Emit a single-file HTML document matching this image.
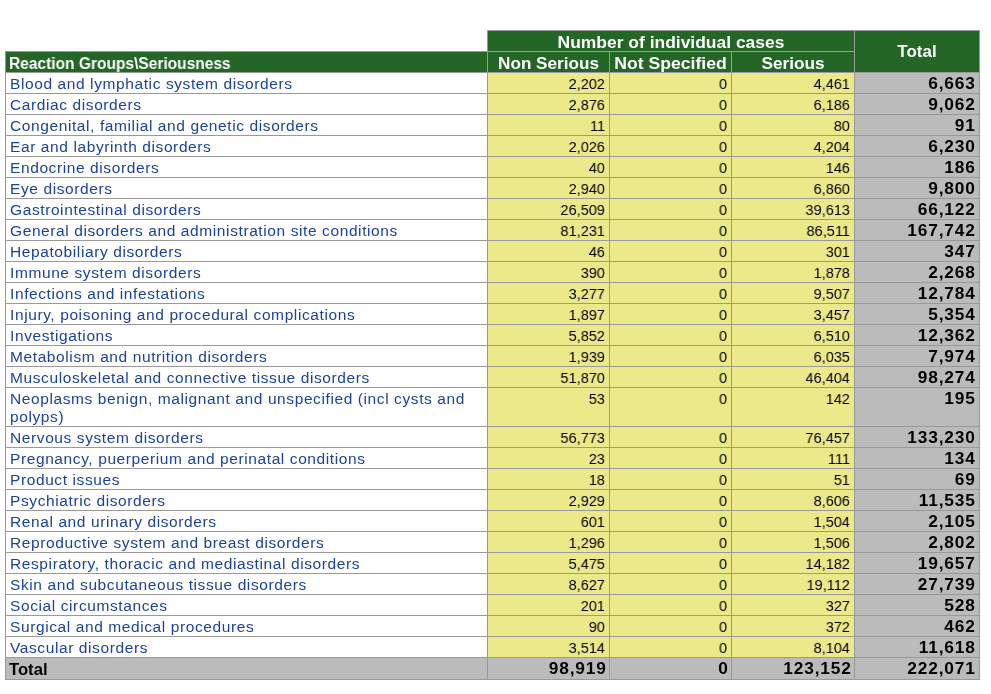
<!DOCTYPE html>
<html><head><meta charset="utf-8"><style>
html,body{margin:0;padding:0;background:#fff;width:991px;height:694px;overflow:hidden;position:relative}
i{position:absolute;display:block}
b{position:absolute;display:block;white-space:nowrap;will-change:transform;line-height:20px;height:20px;font-family:"Liberation Sans",sans-serif;font-weight:normal}
</style></head><body>
<i style="left:487px;top:30px;width:493px;height:43px;background:#999999"></i>
<i style="left:5px;top:51px;width:483px;height:22px;background:#999999"></i>
<i style="left:488px;top:31px;width:366px;height:20px;background:#246626"></i>
<i style="left:855px;top:31px;width:124px;height:41px;background:#246626"></i>
<i style="left:6px;top:52px;width:481px;height:20px;background:#246626"></i>
<i style="left:488px;top:52px;width:121px;height:20px;background:#246626"></i>
<i style="left:610px;top:52px;width:121px;height:20px;background:#246626"></i>
<i style="left:732px;top:52px;width:122px;height:20px;background:#246626"></i>
<i style="left:5px;top:72px;width:975px;height:608px;background:#999999"></i>
<i style="left:6px;top:73px;width:481px;height:20px;background:#ffffff"></i>
<i style="left:488px;top:73px;width:121px;height:20px;background:#ece98b"></i>
<i style="left:610px;top:73px;width:121px;height:20px;background:#ece98b"></i>
<i style="left:732px;top:73px;width:122px;height:20px;background:#ece98b"></i>
<i style="left:855px;top:73px;width:124px;height:20px;background:#bbbbbb"></i>
<i style="left:6px;top:94px;width:481px;height:20px;background:#ffffff"></i>
<i style="left:488px;top:94px;width:121px;height:20px;background:#ece98b"></i>
<i style="left:610px;top:94px;width:121px;height:20px;background:#ece98b"></i>
<i style="left:732px;top:94px;width:122px;height:20px;background:#ece98b"></i>
<i style="left:855px;top:94px;width:124px;height:20px;background:#bbbbbb"></i>
<i style="left:6px;top:115px;width:481px;height:20px;background:#ffffff"></i>
<i style="left:488px;top:115px;width:121px;height:20px;background:#ece98b"></i>
<i style="left:610px;top:115px;width:121px;height:20px;background:#ece98b"></i>
<i style="left:732px;top:115px;width:122px;height:20px;background:#ece98b"></i>
<i style="left:855px;top:115px;width:124px;height:20px;background:#bbbbbb"></i>
<i style="left:6px;top:136px;width:481px;height:20px;background:#ffffff"></i>
<i style="left:488px;top:136px;width:121px;height:20px;background:#ece98b"></i>
<i style="left:610px;top:136px;width:121px;height:20px;background:#ece98b"></i>
<i style="left:732px;top:136px;width:122px;height:20px;background:#ece98b"></i>
<i style="left:855px;top:136px;width:124px;height:20px;background:#bbbbbb"></i>
<i style="left:6px;top:157px;width:481px;height:20px;background:#ffffff"></i>
<i style="left:488px;top:157px;width:121px;height:20px;background:#ece98b"></i>
<i style="left:610px;top:157px;width:121px;height:20px;background:#ece98b"></i>
<i style="left:732px;top:157px;width:122px;height:20px;background:#ece98b"></i>
<i style="left:855px;top:157px;width:124px;height:20px;background:#bbbbbb"></i>
<i style="left:6px;top:178px;width:481px;height:20px;background:#ffffff"></i>
<i style="left:488px;top:178px;width:121px;height:20px;background:#ece98b"></i>
<i style="left:610px;top:178px;width:121px;height:20px;background:#ece98b"></i>
<i style="left:732px;top:178px;width:122px;height:20px;background:#ece98b"></i>
<i style="left:855px;top:178px;width:124px;height:20px;background:#bbbbbb"></i>
<i style="left:6px;top:199px;width:481px;height:20px;background:#ffffff"></i>
<i style="left:488px;top:199px;width:121px;height:20px;background:#ece98b"></i>
<i style="left:610px;top:199px;width:121px;height:20px;background:#ece98b"></i>
<i style="left:732px;top:199px;width:122px;height:20px;background:#ece98b"></i>
<i style="left:855px;top:199px;width:124px;height:20px;background:#bbbbbb"></i>
<i style="left:6px;top:220px;width:481px;height:20px;background:#ffffff"></i>
<i style="left:488px;top:220px;width:121px;height:20px;background:#ece98b"></i>
<i style="left:610px;top:220px;width:121px;height:20px;background:#ece98b"></i>
<i style="left:732px;top:220px;width:122px;height:20px;background:#ece98b"></i>
<i style="left:855px;top:220px;width:124px;height:20px;background:#bbbbbb"></i>
<i style="left:6px;top:241px;width:481px;height:20px;background:#ffffff"></i>
<i style="left:488px;top:241px;width:121px;height:20px;background:#ece98b"></i>
<i style="left:610px;top:241px;width:121px;height:20px;background:#ece98b"></i>
<i style="left:732px;top:241px;width:122px;height:20px;background:#ece98b"></i>
<i style="left:855px;top:241px;width:124px;height:20px;background:#bbbbbb"></i>
<i style="left:6px;top:262px;width:481px;height:20px;background:#ffffff"></i>
<i style="left:488px;top:262px;width:121px;height:20px;background:#ece98b"></i>
<i style="left:610px;top:262px;width:121px;height:20px;background:#ece98b"></i>
<i style="left:732px;top:262px;width:122px;height:20px;background:#ece98b"></i>
<i style="left:855px;top:262px;width:124px;height:20px;background:#bbbbbb"></i>
<i style="left:6px;top:283px;width:481px;height:20px;background:#ffffff"></i>
<i style="left:488px;top:283px;width:121px;height:20px;background:#ece98b"></i>
<i style="left:610px;top:283px;width:121px;height:20px;background:#ece98b"></i>
<i style="left:732px;top:283px;width:122px;height:20px;background:#ece98b"></i>
<i style="left:855px;top:283px;width:124px;height:20px;background:#bbbbbb"></i>
<i style="left:6px;top:304px;width:481px;height:20px;background:#ffffff"></i>
<i style="left:488px;top:304px;width:121px;height:20px;background:#ece98b"></i>
<i style="left:610px;top:304px;width:121px;height:20px;background:#ece98b"></i>
<i style="left:732px;top:304px;width:122px;height:20px;background:#ece98b"></i>
<i style="left:855px;top:304px;width:124px;height:20px;background:#bbbbbb"></i>
<i style="left:6px;top:325px;width:481px;height:20px;background:#ffffff"></i>
<i style="left:488px;top:325px;width:121px;height:20px;background:#ece98b"></i>
<i style="left:610px;top:325px;width:121px;height:20px;background:#ece98b"></i>
<i style="left:732px;top:325px;width:122px;height:20px;background:#ece98b"></i>
<i style="left:855px;top:325px;width:124px;height:20px;background:#bbbbbb"></i>
<i style="left:6px;top:346px;width:481px;height:20px;background:#ffffff"></i>
<i style="left:488px;top:346px;width:121px;height:20px;background:#ece98b"></i>
<i style="left:610px;top:346px;width:121px;height:20px;background:#ece98b"></i>
<i style="left:732px;top:346px;width:122px;height:20px;background:#ece98b"></i>
<i style="left:855px;top:346px;width:124px;height:20px;background:#bbbbbb"></i>
<i style="left:6px;top:367px;width:481px;height:20px;background:#ffffff"></i>
<i style="left:488px;top:367px;width:121px;height:20px;background:#ece98b"></i>
<i style="left:610px;top:367px;width:121px;height:20px;background:#ece98b"></i>
<i style="left:732px;top:367px;width:122px;height:20px;background:#ece98b"></i>
<i style="left:855px;top:367px;width:124px;height:20px;background:#bbbbbb"></i>
<i style="left:6px;top:388px;width:481px;height:38px;background:#ffffff"></i>
<i style="left:488px;top:388px;width:121px;height:38px;background:#ece98b"></i>
<i style="left:610px;top:388px;width:121px;height:38px;background:#ece98b"></i>
<i style="left:732px;top:388px;width:122px;height:38px;background:#ece98b"></i>
<i style="left:855px;top:388px;width:124px;height:38px;background:#bbbbbb"></i>
<i style="left:6px;top:427px;width:481px;height:20px;background:#ffffff"></i>
<i style="left:488px;top:427px;width:121px;height:20px;background:#ece98b"></i>
<i style="left:610px;top:427px;width:121px;height:20px;background:#ece98b"></i>
<i style="left:732px;top:427px;width:122px;height:20px;background:#ece98b"></i>
<i style="left:855px;top:427px;width:124px;height:20px;background:#bbbbbb"></i>
<i style="left:6px;top:448px;width:481px;height:20px;background:#ffffff"></i>
<i style="left:488px;top:448px;width:121px;height:20px;background:#ece98b"></i>
<i style="left:610px;top:448px;width:121px;height:20px;background:#ece98b"></i>
<i style="left:732px;top:448px;width:122px;height:20px;background:#ece98b"></i>
<i style="left:855px;top:448px;width:124px;height:20px;background:#bbbbbb"></i>
<i style="left:6px;top:469px;width:481px;height:20px;background:#ffffff"></i>
<i style="left:488px;top:469px;width:121px;height:20px;background:#ece98b"></i>
<i style="left:610px;top:469px;width:121px;height:20px;background:#ece98b"></i>
<i style="left:732px;top:469px;width:122px;height:20px;background:#ece98b"></i>
<i style="left:855px;top:469px;width:124px;height:20px;background:#bbbbbb"></i>
<i style="left:6px;top:490px;width:481px;height:20px;background:#ffffff"></i>
<i style="left:488px;top:490px;width:121px;height:20px;background:#ece98b"></i>
<i style="left:610px;top:490px;width:121px;height:20px;background:#ece98b"></i>
<i style="left:732px;top:490px;width:122px;height:20px;background:#ece98b"></i>
<i style="left:855px;top:490px;width:124px;height:20px;background:#bbbbbb"></i>
<i style="left:6px;top:511px;width:481px;height:20px;background:#ffffff"></i>
<i style="left:488px;top:511px;width:121px;height:20px;background:#ece98b"></i>
<i style="left:610px;top:511px;width:121px;height:20px;background:#ece98b"></i>
<i style="left:732px;top:511px;width:122px;height:20px;background:#ece98b"></i>
<i style="left:855px;top:511px;width:124px;height:20px;background:#bbbbbb"></i>
<i style="left:6px;top:532px;width:481px;height:20px;background:#ffffff"></i>
<i style="left:488px;top:532px;width:121px;height:20px;background:#ece98b"></i>
<i style="left:610px;top:532px;width:121px;height:20px;background:#ece98b"></i>
<i style="left:732px;top:532px;width:122px;height:20px;background:#ece98b"></i>
<i style="left:855px;top:532px;width:124px;height:20px;background:#bbbbbb"></i>
<i style="left:6px;top:553px;width:481px;height:20px;background:#ffffff"></i>
<i style="left:488px;top:553px;width:121px;height:20px;background:#ece98b"></i>
<i style="left:610px;top:553px;width:121px;height:20px;background:#ece98b"></i>
<i style="left:732px;top:553px;width:122px;height:20px;background:#ece98b"></i>
<i style="left:855px;top:553px;width:124px;height:20px;background:#bbbbbb"></i>
<i style="left:6px;top:574px;width:481px;height:20px;background:#ffffff"></i>
<i style="left:488px;top:574px;width:121px;height:20px;background:#ece98b"></i>
<i style="left:610px;top:574px;width:121px;height:20px;background:#ece98b"></i>
<i style="left:732px;top:574px;width:122px;height:20px;background:#ece98b"></i>
<i style="left:855px;top:574px;width:124px;height:20px;background:#bbbbbb"></i>
<i style="left:6px;top:595px;width:481px;height:20px;background:#ffffff"></i>
<i style="left:488px;top:595px;width:121px;height:20px;background:#ece98b"></i>
<i style="left:610px;top:595px;width:121px;height:20px;background:#ece98b"></i>
<i style="left:732px;top:595px;width:122px;height:20px;background:#ece98b"></i>
<i style="left:855px;top:595px;width:124px;height:20px;background:#bbbbbb"></i>
<i style="left:6px;top:616px;width:481px;height:20px;background:#ffffff"></i>
<i style="left:488px;top:616px;width:121px;height:20px;background:#ece98b"></i>
<i style="left:610px;top:616px;width:121px;height:20px;background:#ece98b"></i>
<i style="left:732px;top:616px;width:122px;height:20px;background:#ece98b"></i>
<i style="left:855px;top:616px;width:124px;height:20px;background:#bbbbbb"></i>
<i style="left:6px;top:637px;width:481px;height:20px;background:#ffffff"></i>
<i style="left:488px;top:637px;width:121px;height:20px;background:#ece98b"></i>
<i style="left:610px;top:637px;width:121px;height:20px;background:#ece98b"></i>
<i style="left:732px;top:637px;width:122px;height:20px;background:#ece98b"></i>
<i style="left:855px;top:637px;width:124px;height:20px;background:#bbbbbb"></i>
<i style="left:6px;top:658px;width:481px;height:21px;background:#bbbbbb"></i>
<i style="left:488px;top:658px;width:121px;height:21px;background:#bbbbbb"></i>
<i style="left:610px;top:658px;width:121px;height:21px;background:#bbbbbb"></i>
<i style="left:732px;top:658px;width:122px;height:21px;background:#bbbbbb"></i>
<i style="left:855px;top:658px;width:124px;height:21px;background:#bbbbbb"></i>
<b style="left:9.00px;top:53.96px;width:478.00px;font-size:16px;letter-spacing:0px;color:#fff;text-align:left;font-weight:bold;transform:scaleX(0.97);transform-origin:left">Reaction Groups\Seriousness</b>
<b style="left:488.00px;top:32.96px;width:366.00px;font-size:16px;letter-spacing:0px;color:#fff;text-align:center;font-weight:bold;transform:scaleX(1.09);transform-origin:center">Number of individual cases</b>
<b style="left:488.00px;top:53.96px;width:121.00px;font-size:16px;letter-spacing:0px;color:#fff;text-align:center;font-weight:bold;transform:scaleX(1.07);transform-origin:center">Non Serious</b>
<b style="left:610.00px;top:53.96px;width:121.00px;font-size:16px;letter-spacing:0px;color:#fff;text-align:center;font-weight:bold;transform:scaleX(1.1);transform-origin:center">Not Specified</b>
<b style="left:732.00px;top:53.96px;width:122.00px;font-size:16px;letter-spacing:0px;color:#fff;text-align:center;font-weight:bold;transform:scaleX(1.075);transform-origin:center">Serious</b>
<b style="left:855.00px;top:41.96px;width:124.00px;font-size:16px;letter-spacing:0px;color:#fff;text-align:center;font-weight:bold;transform:scaleX(1.06);transform-origin:center">Total</b>
<b style="left:10.00px;top:73.63px;width:476.00px;font-size:15.5px;letter-spacing:0.6px;color:#1a429e;text-align:left">Blood and lymphatic system disorders</b>
<b style="left:488.00px;top:73.63px;width:117.00px;font-size:15.5px;letter-spacing:0px;color:#000;text-align:right;transform:scaleX(0.94);transform-origin:right">2,202</b>
<b style="left:610.00px;top:73.63px;width:117.00px;font-size:15.5px;letter-spacing:0px;color:#000;text-align:right;transform:scaleX(0.94);transform-origin:right">0</b>
<b style="left:732.00px;top:73.63px;width:118.00px;font-size:15.5px;letter-spacing:0px;color:#000;text-align:right;transform:scaleX(0.94);transform-origin:right">4,461</b>
<b style="left:855.00px;top:74.46px;width:120.80px;font-size:16px;letter-spacing:0.8px;color:#000;text-align:right;font-weight:bold;transform:scaleX(1.08);transform-origin:right">6,663</b>
<b style="left:10.00px;top:94.63px;width:476.00px;font-size:15.5px;letter-spacing:0.6px;color:#1a429e;text-align:left">Cardiac disorders</b>
<b style="left:488.00px;top:94.63px;width:117.00px;font-size:15.5px;letter-spacing:0px;color:#000;text-align:right;transform:scaleX(0.94);transform-origin:right">2,876</b>
<b style="left:610.00px;top:94.63px;width:117.00px;font-size:15.5px;letter-spacing:0px;color:#000;text-align:right;transform:scaleX(0.94);transform-origin:right">0</b>
<b style="left:732.00px;top:94.63px;width:118.00px;font-size:15.5px;letter-spacing:0px;color:#000;text-align:right;transform:scaleX(0.94);transform-origin:right">6,186</b>
<b style="left:855.00px;top:95.46px;width:120.80px;font-size:16px;letter-spacing:0.8px;color:#000;text-align:right;font-weight:bold;transform:scaleX(1.08);transform-origin:right">9,062</b>
<b style="left:10.00px;top:115.63px;width:476.00px;font-size:15.5px;letter-spacing:0.6px;color:#1a429e;text-align:left">Congenital, familial and genetic disorders</b>
<b style="left:488.00px;top:115.63px;width:117.00px;font-size:15.5px;letter-spacing:0px;color:#000;text-align:right;transform:scaleX(0.94);transform-origin:right">11</b>
<b style="left:610.00px;top:115.63px;width:117.00px;font-size:15.5px;letter-spacing:0px;color:#000;text-align:right;transform:scaleX(0.94);transform-origin:right">0</b>
<b style="left:732.00px;top:115.63px;width:118.00px;font-size:15.5px;letter-spacing:0px;color:#000;text-align:right;transform:scaleX(0.94);transform-origin:right">80</b>
<b style="left:855.00px;top:116.46px;width:120.80px;font-size:16px;letter-spacing:0.8px;color:#000;text-align:right;font-weight:bold;transform:scaleX(1.08);transform-origin:right">91</b>
<b style="left:10.00px;top:136.63px;width:476.00px;font-size:15.5px;letter-spacing:0.6px;color:#1a429e;text-align:left">Ear and labyrinth disorders</b>
<b style="left:488.00px;top:136.63px;width:117.00px;font-size:15.5px;letter-spacing:0px;color:#000;text-align:right;transform:scaleX(0.94);transform-origin:right">2,026</b>
<b style="left:610.00px;top:136.63px;width:117.00px;font-size:15.5px;letter-spacing:0px;color:#000;text-align:right;transform:scaleX(0.94);transform-origin:right">0</b>
<b style="left:732.00px;top:136.63px;width:118.00px;font-size:15.5px;letter-spacing:0px;color:#000;text-align:right;transform:scaleX(0.94);transform-origin:right">4,204</b>
<b style="left:855.00px;top:137.46px;width:120.80px;font-size:16px;letter-spacing:0.8px;color:#000;text-align:right;font-weight:bold;transform:scaleX(1.08);transform-origin:right">6,230</b>
<b style="left:10.00px;top:157.63px;width:476.00px;font-size:15.5px;letter-spacing:0.6px;color:#1a429e;text-align:left">Endocrine disorders</b>
<b style="left:488.00px;top:157.63px;width:117.00px;font-size:15.5px;letter-spacing:0px;color:#000;text-align:right;transform:scaleX(0.94);transform-origin:right">40</b>
<b style="left:610.00px;top:157.63px;width:117.00px;font-size:15.5px;letter-spacing:0px;color:#000;text-align:right;transform:scaleX(0.94);transform-origin:right">0</b>
<b style="left:732.00px;top:157.63px;width:118.00px;font-size:15.5px;letter-spacing:0px;color:#000;text-align:right;transform:scaleX(0.94);transform-origin:right">146</b>
<b style="left:855.00px;top:158.46px;width:120.80px;font-size:16px;letter-spacing:0.8px;color:#000;text-align:right;font-weight:bold;transform:scaleX(1.08);transform-origin:right">186</b>
<b style="left:10.00px;top:178.63px;width:476.00px;font-size:15.5px;letter-spacing:0.6px;color:#1a429e;text-align:left">Eye disorders</b>
<b style="left:488.00px;top:178.63px;width:117.00px;font-size:15.5px;letter-spacing:0px;color:#000;text-align:right;transform:scaleX(0.94);transform-origin:right">2,940</b>
<b style="left:610.00px;top:178.63px;width:117.00px;font-size:15.5px;letter-spacing:0px;color:#000;text-align:right;transform:scaleX(0.94);transform-origin:right">0</b>
<b style="left:732.00px;top:178.63px;width:118.00px;font-size:15.5px;letter-spacing:0px;color:#000;text-align:right;transform:scaleX(0.94);transform-origin:right">6,860</b>
<b style="left:855.00px;top:179.46px;width:120.80px;font-size:16px;letter-spacing:0.8px;color:#000;text-align:right;font-weight:bold;transform:scaleX(1.08);transform-origin:right">9,800</b>
<b style="left:10.00px;top:199.63px;width:476.00px;font-size:15.5px;letter-spacing:0.6px;color:#1a429e;text-align:left">Gastrointestinal disorders</b>
<b style="left:488.00px;top:199.63px;width:117.00px;font-size:15.5px;letter-spacing:0px;color:#000;text-align:right;transform:scaleX(0.94);transform-origin:right">26,509</b>
<b style="left:610.00px;top:199.63px;width:117.00px;font-size:15.5px;letter-spacing:0px;color:#000;text-align:right;transform:scaleX(0.94);transform-origin:right">0</b>
<b style="left:732.00px;top:199.63px;width:118.00px;font-size:15.5px;letter-spacing:0px;color:#000;text-align:right;transform:scaleX(0.94);transform-origin:right">39,613</b>
<b style="left:855.00px;top:200.46px;width:120.80px;font-size:16px;letter-spacing:0.8px;color:#000;text-align:right;font-weight:bold;transform:scaleX(1.08);transform-origin:right">66,122</b>
<b style="left:10.00px;top:220.63px;width:476.00px;font-size:15.5px;letter-spacing:0.6px;color:#1a429e;text-align:left">General disorders and administration site conditions</b>
<b style="left:488.00px;top:220.63px;width:117.00px;font-size:15.5px;letter-spacing:0px;color:#000;text-align:right;transform:scaleX(0.94);transform-origin:right">81,231</b>
<b style="left:610.00px;top:220.63px;width:117.00px;font-size:15.5px;letter-spacing:0px;color:#000;text-align:right;transform:scaleX(0.94);transform-origin:right">0</b>
<b style="left:732.00px;top:220.63px;width:118.00px;font-size:15.5px;letter-spacing:0px;color:#000;text-align:right;transform:scaleX(0.94);transform-origin:right">86,511</b>
<b style="left:855.00px;top:221.46px;width:120.80px;font-size:16px;letter-spacing:0.8px;color:#000;text-align:right;font-weight:bold;transform:scaleX(1.08);transform-origin:right">167,742</b>
<b style="left:10.00px;top:241.63px;width:476.00px;font-size:15.5px;letter-spacing:0.6px;color:#1a429e;text-align:left">Hepatobiliary disorders</b>
<b style="left:488.00px;top:241.63px;width:117.00px;font-size:15.5px;letter-spacing:0px;color:#000;text-align:right;transform:scaleX(0.94);transform-origin:right">46</b>
<b style="left:610.00px;top:241.63px;width:117.00px;font-size:15.5px;letter-spacing:0px;color:#000;text-align:right;transform:scaleX(0.94);transform-origin:right">0</b>
<b style="left:732.00px;top:241.63px;width:118.00px;font-size:15.5px;letter-spacing:0px;color:#000;text-align:right;transform:scaleX(0.94);transform-origin:right">301</b>
<b style="left:855.00px;top:242.46px;width:120.80px;font-size:16px;letter-spacing:0.8px;color:#000;text-align:right;font-weight:bold;transform:scaleX(1.08);transform-origin:right">347</b>
<b style="left:10.00px;top:262.63px;width:476.00px;font-size:15.5px;letter-spacing:0.6px;color:#1a429e;text-align:left">Immune system disorders</b>
<b style="left:488.00px;top:262.63px;width:117.00px;font-size:15.5px;letter-spacing:0px;color:#000;text-align:right;transform:scaleX(0.94);transform-origin:right">390</b>
<b style="left:610.00px;top:262.63px;width:117.00px;font-size:15.5px;letter-spacing:0px;color:#000;text-align:right;transform:scaleX(0.94);transform-origin:right">0</b>
<b style="left:732.00px;top:262.63px;width:118.00px;font-size:15.5px;letter-spacing:0px;color:#000;text-align:right;transform:scaleX(0.94);transform-origin:right">1,878</b>
<b style="left:855.00px;top:263.46px;width:120.80px;font-size:16px;letter-spacing:0.8px;color:#000;text-align:right;font-weight:bold;transform:scaleX(1.08);transform-origin:right">2,268</b>
<b style="left:10.00px;top:283.63px;width:476.00px;font-size:15.5px;letter-spacing:0.6px;color:#1a429e;text-align:left">Infections and infestations</b>
<b style="left:488.00px;top:283.63px;width:117.00px;font-size:15.5px;letter-spacing:0px;color:#000;text-align:right;transform:scaleX(0.94);transform-origin:right">3,277</b>
<b style="left:610.00px;top:283.63px;width:117.00px;font-size:15.5px;letter-spacing:0px;color:#000;text-align:right;transform:scaleX(0.94);transform-origin:right">0</b>
<b style="left:732.00px;top:283.63px;width:118.00px;font-size:15.5px;letter-spacing:0px;color:#000;text-align:right;transform:scaleX(0.94);transform-origin:right">9,507</b>
<b style="left:855.00px;top:284.46px;width:120.80px;font-size:16px;letter-spacing:0.8px;color:#000;text-align:right;font-weight:bold;transform:scaleX(1.08);transform-origin:right">12,784</b>
<b style="left:10.00px;top:304.63px;width:476.00px;font-size:15.5px;letter-spacing:0.6px;color:#1a429e;text-align:left">Injury, poisoning and procedural complications</b>
<b style="left:488.00px;top:304.63px;width:117.00px;font-size:15.5px;letter-spacing:0px;color:#000;text-align:right;transform:scaleX(0.94);transform-origin:right">1,897</b>
<b style="left:610.00px;top:304.63px;width:117.00px;font-size:15.5px;letter-spacing:0px;color:#000;text-align:right;transform:scaleX(0.94);transform-origin:right">0</b>
<b style="left:732.00px;top:304.63px;width:118.00px;font-size:15.5px;letter-spacing:0px;color:#000;text-align:right;transform:scaleX(0.94);transform-origin:right">3,457</b>
<b style="left:855.00px;top:305.46px;width:120.80px;font-size:16px;letter-spacing:0.8px;color:#000;text-align:right;font-weight:bold;transform:scaleX(1.08);transform-origin:right">5,354</b>
<b style="left:10.00px;top:325.63px;width:476.00px;font-size:15.5px;letter-spacing:0.6px;color:#1a429e;text-align:left">Investigations</b>
<b style="left:488.00px;top:325.63px;width:117.00px;font-size:15.5px;letter-spacing:0px;color:#000;text-align:right;transform:scaleX(0.94);transform-origin:right">5,852</b>
<b style="left:610.00px;top:325.63px;width:117.00px;font-size:15.5px;letter-spacing:0px;color:#000;text-align:right;transform:scaleX(0.94);transform-origin:right">0</b>
<b style="left:732.00px;top:325.63px;width:118.00px;font-size:15.5px;letter-spacing:0px;color:#000;text-align:right;transform:scaleX(0.94);transform-origin:right">6,510</b>
<b style="left:855.00px;top:326.46px;width:120.80px;font-size:16px;letter-spacing:0.8px;color:#000;text-align:right;font-weight:bold;transform:scaleX(1.08);transform-origin:right">12,362</b>
<b style="left:10.00px;top:346.63px;width:476.00px;font-size:15.5px;letter-spacing:0.6px;color:#1a429e;text-align:left">Metabolism and nutrition disorders</b>
<b style="left:488.00px;top:346.63px;width:117.00px;font-size:15.5px;letter-spacing:0px;color:#000;text-align:right;transform:scaleX(0.94);transform-origin:right">1,939</b>
<b style="left:610.00px;top:346.63px;width:117.00px;font-size:15.5px;letter-spacing:0px;color:#000;text-align:right;transform:scaleX(0.94);transform-origin:right">0</b>
<b style="left:732.00px;top:346.63px;width:118.00px;font-size:15.5px;letter-spacing:0px;color:#000;text-align:right;transform:scaleX(0.94);transform-origin:right">6,035</b>
<b style="left:855.00px;top:347.46px;width:120.80px;font-size:16px;letter-spacing:0.8px;color:#000;text-align:right;font-weight:bold;transform:scaleX(1.08);transform-origin:right">7,974</b>
<b style="left:10.00px;top:367.63px;width:476.00px;font-size:15.5px;letter-spacing:0.6px;color:#1a429e;text-align:left">Musculoskeletal and connective tissue disorders</b>
<b style="left:488.00px;top:367.63px;width:117.00px;font-size:15.5px;letter-spacing:0px;color:#000;text-align:right;transform:scaleX(0.94);transform-origin:right">51,870</b>
<b style="left:610.00px;top:367.63px;width:117.00px;font-size:15.5px;letter-spacing:0px;color:#000;text-align:right;transform:scaleX(0.94);transform-origin:right">0</b>
<b style="left:732.00px;top:367.63px;width:118.00px;font-size:15.5px;letter-spacing:0px;color:#000;text-align:right;transform:scaleX(0.94);transform-origin:right">46,404</b>
<b style="left:855.00px;top:368.46px;width:120.80px;font-size:16px;letter-spacing:0.8px;color:#000;text-align:right;font-weight:bold;transform:scaleX(1.08);transform-origin:right">98,274</b>
<b style="left:10.00px;top:388.63px;width:476.00px;font-size:15.5px;letter-spacing:0.6px;color:#1a429e;text-align:left">Neoplasms benign, malignant and unspecified (incl cysts and</b>
<b style="left:10.00px;top:406.63px;width:476.00px;font-size:15.5px;letter-spacing:0.6px;color:#1a429e;text-align:left">polyps)</b>
<b style="left:488.00px;top:388.63px;width:117.00px;font-size:15.5px;letter-spacing:0px;color:#000;text-align:right;transform:scaleX(0.94);transform-origin:right">53</b>
<b style="left:610.00px;top:388.63px;width:117.00px;font-size:15.5px;letter-spacing:0px;color:#000;text-align:right;transform:scaleX(0.94);transform-origin:right">0</b>
<b style="left:732.00px;top:388.63px;width:118.00px;font-size:15.5px;letter-spacing:0px;color:#000;text-align:right;transform:scaleX(0.94);transform-origin:right">142</b>
<b style="left:855.00px;top:389.46px;width:120.80px;font-size:16px;letter-spacing:0.8px;color:#000;text-align:right;font-weight:bold;transform:scaleX(1.08);transform-origin:right">195</b>
<b style="left:10.00px;top:427.63px;width:476.00px;font-size:15.5px;letter-spacing:0.6px;color:#1a429e;text-align:left">Nervous system disorders</b>
<b style="left:488.00px;top:427.63px;width:117.00px;font-size:15.5px;letter-spacing:0px;color:#000;text-align:right;transform:scaleX(0.94);transform-origin:right">56,773</b>
<b style="left:610.00px;top:427.63px;width:117.00px;font-size:15.5px;letter-spacing:0px;color:#000;text-align:right;transform:scaleX(0.94);transform-origin:right">0</b>
<b style="left:732.00px;top:427.63px;width:118.00px;font-size:15.5px;letter-spacing:0px;color:#000;text-align:right;transform:scaleX(0.94);transform-origin:right">76,457</b>
<b style="left:855.00px;top:428.46px;width:120.80px;font-size:16px;letter-spacing:0.8px;color:#000;text-align:right;font-weight:bold;transform:scaleX(1.08);transform-origin:right">133,230</b>
<b style="left:10.00px;top:448.63px;width:476.00px;font-size:15.5px;letter-spacing:0.6px;color:#1a429e;text-align:left">Pregnancy, puerperium and perinatal conditions</b>
<b style="left:488.00px;top:448.63px;width:117.00px;font-size:15.5px;letter-spacing:0px;color:#000;text-align:right;transform:scaleX(0.94);transform-origin:right">23</b>
<b style="left:610.00px;top:448.63px;width:117.00px;font-size:15.5px;letter-spacing:0px;color:#000;text-align:right;transform:scaleX(0.94);transform-origin:right">0</b>
<b style="left:732.00px;top:448.63px;width:118.00px;font-size:15.5px;letter-spacing:0px;color:#000;text-align:right;transform:scaleX(0.94);transform-origin:right">111</b>
<b style="left:855.00px;top:449.46px;width:120.80px;font-size:16px;letter-spacing:0.8px;color:#000;text-align:right;font-weight:bold;transform:scaleX(1.08);transform-origin:right">134</b>
<b style="left:10.00px;top:469.63px;width:476.00px;font-size:15.5px;letter-spacing:0.6px;color:#1a429e;text-align:left">Product issues</b>
<b style="left:488.00px;top:469.63px;width:117.00px;font-size:15.5px;letter-spacing:0px;color:#000;text-align:right;transform:scaleX(0.94);transform-origin:right">18</b>
<b style="left:610.00px;top:469.63px;width:117.00px;font-size:15.5px;letter-spacing:0px;color:#000;text-align:right;transform:scaleX(0.94);transform-origin:right">0</b>
<b style="left:732.00px;top:469.63px;width:118.00px;font-size:15.5px;letter-spacing:0px;color:#000;text-align:right;transform:scaleX(0.94);transform-origin:right">51</b>
<b style="left:855.00px;top:470.46px;width:120.80px;font-size:16px;letter-spacing:0.8px;color:#000;text-align:right;font-weight:bold;transform:scaleX(1.08);transform-origin:right">69</b>
<b style="left:10.00px;top:490.63px;width:476.00px;font-size:15.5px;letter-spacing:0.6px;color:#1a429e;text-align:left">Psychiatric disorders</b>
<b style="left:488.00px;top:490.63px;width:117.00px;font-size:15.5px;letter-spacing:0px;color:#000;text-align:right;transform:scaleX(0.94);transform-origin:right">2,929</b>
<b style="left:610.00px;top:490.63px;width:117.00px;font-size:15.5px;letter-spacing:0px;color:#000;text-align:right;transform:scaleX(0.94);transform-origin:right">0</b>
<b style="left:732.00px;top:490.63px;width:118.00px;font-size:15.5px;letter-spacing:0px;color:#000;text-align:right;transform:scaleX(0.94);transform-origin:right">8,606</b>
<b style="left:855.00px;top:491.46px;width:120.80px;font-size:16px;letter-spacing:0.8px;color:#000;text-align:right;font-weight:bold;transform:scaleX(1.08);transform-origin:right">11,535</b>
<b style="left:10.00px;top:511.63px;width:476.00px;font-size:15.5px;letter-spacing:0.6px;color:#1a429e;text-align:left">Renal and urinary disorders</b>
<b style="left:488.00px;top:511.63px;width:117.00px;font-size:15.5px;letter-spacing:0px;color:#000;text-align:right;transform:scaleX(0.94);transform-origin:right">601</b>
<b style="left:610.00px;top:511.63px;width:117.00px;font-size:15.5px;letter-spacing:0px;color:#000;text-align:right;transform:scaleX(0.94);transform-origin:right">0</b>
<b style="left:732.00px;top:511.63px;width:118.00px;font-size:15.5px;letter-spacing:0px;color:#000;text-align:right;transform:scaleX(0.94);transform-origin:right">1,504</b>
<b style="left:855.00px;top:512.46px;width:120.80px;font-size:16px;letter-spacing:0.8px;color:#000;text-align:right;font-weight:bold;transform:scaleX(1.08);transform-origin:right">2,105</b>
<b style="left:10.00px;top:532.63px;width:476.00px;font-size:15.5px;letter-spacing:0.6px;color:#1a429e;text-align:left">Reproductive system and breast disorders</b>
<b style="left:488.00px;top:532.63px;width:117.00px;font-size:15.5px;letter-spacing:0px;color:#000;text-align:right;transform:scaleX(0.94);transform-origin:right">1,296</b>
<b style="left:610.00px;top:532.63px;width:117.00px;font-size:15.5px;letter-spacing:0px;color:#000;text-align:right;transform:scaleX(0.94);transform-origin:right">0</b>
<b style="left:732.00px;top:532.63px;width:118.00px;font-size:15.5px;letter-spacing:0px;color:#000;text-align:right;transform:scaleX(0.94);transform-origin:right">1,506</b>
<b style="left:855.00px;top:533.46px;width:120.80px;font-size:16px;letter-spacing:0.8px;color:#000;text-align:right;font-weight:bold;transform:scaleX(1.08);transform-origin:right">2,802</b>
<b style="left:10.00px;top:553.63px;width:476.00px;font-size:15.5px;letter-spacing:0.6px;color:#1a429e;text-align:left">Respiratory, thoracic and mediastinal disorders</b>
<b style="left:488.00px;top:553.63px;width:117.00px;font-size:15.5px;letter-spacing:0px;color:#000;text-align:right;transform:scaleX(0.94);transform-origin:right">5,475</b>
<b style="left:610.00px;top:553.63px;width:117.00px;font-size:15.5px;letter-spacing:0px;color:#000;text-align:right;transform:scaleX(0.94);transform-origin:right">0</b>
<b style="left:732.00px;top:553.63px;width:118.00px;font-size:15.5px;letter-spacing:0px;color:#000;text-align:right;transform:scaleX(0.94);transform-origin:right">14,182</b>
<b style="left:855.00px;top:554.46px;width:120.80px;font-size:16px;letter-spacing:0.8px;color:#000;text-align:right;font-weight:bold;transform:scaleX(1.08);transform-origin:right">19,657</b>
<b style="left:10.00px;top:574.63px;width:476.00px;font-size:15.5px;letter-spacing:0.6px;color:#1a429e;text-align:left">Skin and subcutaneous tissue disorders</b>
<b style="left:488.00px;top:574.63px;width:117.00px;font-size:15.5px;letter-spacing:0px;color:#000;text-align:right;transform:scaleX(0.94);transform-origin:right">8,627</b>
<b style="left:610.00px;top:574.63px;width:117.00px;font-size:15.5px;letter-spacing:0px;color:#000;text-align:right;transform:scaleX(0.94);transform-origin:right">0</b>
<b style="left:732.00px;top:574.63px;width:118.00px;font-size:15.5px;letter-spacing:0px;color:#000;text-align:right;transform:scaleX(0.94);transform-origin:right">19,112</b>
<b style="left:855.00px;top:575.46px;width:120.80px;font-size:16px;letter-spacing:0.8px;color:#000;text-align:right;font-weight:bold;transform:scaleX(1.08);transform-origin:right">27,739</b>
<b style="left:10.00px;top:595.63px;width:476.00px;font-size:15.5px;letter-spacing:0.6px;color:#1a429e;text-align:left">Social circumstances</b>
<b style="left:488.00px;top:595.63px;width:117.00px;font-size:15.5px;letter-spacing:0px;color:#000;text-align:right;transform:scaleX(0.94);transform-origin:right">201</b>
<b style="left:610.00px;top:595.63px;width:117.00px;font-size:15.5px;letter-spacing:0px;color:#000;text-align:right;transform:scaleX(0.94);transform-origin:right">0</b>
<b style="left:732.00px;top:595.63px;width:118.00px;font-size:15.5px;letter-spacing:0px;color:#000;text-align:right;transform:scaleX(0.94);transform-origin:right">327</b>
<b style="left:855.00px;top:596.46px;width:120.80px;font-size:16px;letter-spacing:0.8px;color:#000;text-align:right;font-weight:bold;transform:scaleX(1.08);transform-origin:right">528</b>
<b style="left:10.00px;top:616.63px;width:476.00px;font-size:15.5px;letter-spacing:0.6px;color:#1a429e;text-align:left">Surgical and medical procedures</b>
<b style="left:488.00px;top:616.63px;width:117.00px;font-size:15.5px;letter-spacing:0px;color:#000;text-align:right;transform:scaleX(0.94);transform-origin:right">90</b>
<b style="left:610.00px;top:616.63px;width:117.00px;font-size:15.5px;letter-spacing:0px;color:#000;text-align:right;transform:scaleX(0.94);transform-origin:right">0</b>
<b style="left:732.00px;top:616.63px;width:118.00px;font-size:15.5px;letter-spacing:0px;color:#000;text-align:right;transform:scaleX(0.94);transform-origin:right">372</b>
<b style="left:855.00px;top:617.46px;width:120.80px;font-size:16px;letter-spacing:0.8px;color:#000;text-align:right;font-weight:bold;transform:scaleX(1.08);transform-origin:right">462</b>
<b style="left:10.00px;top:637.63px;width:476.00px;font-size:15.5px;letter-spacing:0.6px;color:#1a429e;text-align:left">Vascular disorders</b>
<b style="left:488.00px;top:637.63px;width:117.00px;font-size:15.5px;letter-spacing:0px;color:#000;text-align:right;transform:scaleX(0.94);transform-origin:right">3,514</b>
<b style="left:610.00px;top:637.63px;width:117.00px;font-size:15.5px;letter-spacing:0px;color:#000;text-align:right;transform:scaleX(0.94);transform-origin:right">0</b>
<b style="left:732.00px;top:637.63px;width:118.00px;font-size:15.5px;letter-spacing:0px;color:#000;text-align:right;transform:scaleX(0.94);transform-origin:right">8,104</b>
<b style="left:855.00px;top:638.46px;width:120.80px;font-size:16px;letter-spacing:0.8px;color:#000;text-align:right;font-weight:bold;transform:scaleX(1.08);transform-origin:right">11,618</b>
<b style="left:9.00px;top:659.96px;width:477.00px;font-size:16px;letter-spacing:0px;color:#000;text-align:left;font-weight:bold;transform:scaleX(1.04);transform-origin:left">Total</b>
<b style="left:488.00px;top:659.46px;width:118.80px;font-size:16px;letter-spacing:0.8px;color:#000;text-align:right;font-weight:bold;transform:scaleX(1.08);transform-origin:right">98,919</b>
<b style="left:610.00px;top:659.46px;width:118.80px;font-size:16px;letter-spacing:0.8px;color:#000;text-align:right;font-weight:bold;transform:scaleX(1.08);transform-origin:right">0</b>
<b style="left:732.00px;top:659.46px;width:119.80px;font-size:16px;letter-spacing:0.8px;color:#000;text-align:right;font-weight:bold;transform:scaleX(1.08);transform-origin:right">123,152</b>
<b style="left:855.00px;top:659.46px;width:120.80px;font-size:16px;letter-spacing:0.8px;color:#000;text-align:right;font-weight:bold;transform:scaleX(1.08);transform-origin:right">222,071</b>
</body></html>
